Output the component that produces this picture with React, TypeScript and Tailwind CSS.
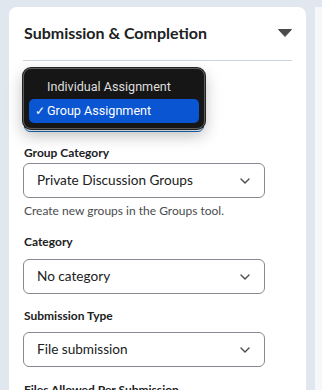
import type { ReactNode } from 'react'

function Chevron() {
  return (
    <svg width="10" height="6" viewBox="0 0 10 6" fill="none" aria-hidden="true">
      <path d="M1 1l4 4 4-4" stroke="#494c4e" strokeWidth="1.4" strokeLinecap="round" strokeLinejoin="round" />
    </svg>
  )
}

type SelectBoxProps = {
  value: string
  className?: string
}

function SelectBox({ value, className = '' }: SelectBoxProps) {
  return (
    <div
      className={`flex h-[35px] w-[242px] items-center justify-between rounded-[6px] border border-[#868b91] bg-white pl-[13px] pr-[14px] text-[13.6px] text-[#202122] ${className}`}
    >
      <span>{value}</span>
      <Chevron />
    </div>
  )
}

function Label({ children, className = '' }: { children: ReactNode; className?: string }) {
  return <p className={`text-[12px] font-bold leading-[16px] text-[#202122] ${className}`}>{children}</p>
}

function NativeMenu() {
  return (
    <div
      className="absolute left-[14px] top-[61px] w-[182px] rounded-[8px] border border-[#5c5c5c] bg-[#161616] px-[5px] pb-[5px] pt-[6px] shadow-[0_0_0_1px_rgba(0,0,0,0.85),0_6px_16px_rgba(0,0,0,0.28)]"
      style={{ fontFamily: 'Roboto, "Noto Sans", sans-serif' }}
    >
      <div className="flex h-[24px] items-center pl-[18px] text-[12.6px] text-[#dedede]">Individual Assignment</div>
      <div className="flex h-[24px] items-center rounded-[5px] bg-[#0a55d2] text-[12.6px] text-white">
        <span className="w-[18px] pl-[6px] text-[12px]">✓</span>
        <span>Group Assignment</span>
      </div>
    </div>
  )
}

export default function App() {
  return (
    <div
      className="flex h-[390px] w-full overflow-hidden bg-[#e1e7ef] pl-[9px] pt-[7px]"
      style={{ fontFamily: 'Lato, "Open Sans", sans-serif' }}
    >
      <section className="relative h-full w-[297px] shrink-0 rounded-t-[8px] bg-white pl-[14px] pr-[14px] pt-[14px]">
        <header className="flex h-[24px] items-center justify-between pl-px">
          <h2 className="text-[16px] font-bold leading-[24px] text-[#202122]">Submission &amp; Completion</h2>
          <svg width="14" height="8" viewBox="0 0 14 8" aria-hidden="true">
            <path d="M0.5 0.5h13L7 7.5z" fill="#494c4e" stroke="#494c4e" strokeLinejoin="round" />
          </svg>
        </header>
        <div className="mt-[15px] border-t border-[#cdd4de]" />

        {/* select behind the open native menu */}
        <div className="ml-px mt-[36px] h-[35px] w-[180px] rounded-[6px] border border-[#1a6fbf]" />

        <Label className="mt-[13px] pl-px">Group Category</Label>
        <SelectBox value="Private Discussion Groups" className="mt-[2px]" />
        <p className="mt-[5px] pl-px text-[12px] leading-[16px] text-[#494c4e]">Create new groups in the Groups tool.</p>

        <Label className="mt-[15px] pl-px">Category</Label>
        <SelectBox value="No category" className="mt-[9px]" />

        <Label className="mt-[14px] pl-px">Submission Type</Label>
        <SelectBox value="File submission" className="mt-[8px]" />

        <Label className="mt-[15px] pl-px">Files Allowed Per Submission</Label>

        <NativeMenu />
      </section>
      <div className="w-[9px] shrink-0" />
      <div className="h-full flex-1 bg-[#f6f7f9]" />
    </div>
  )
}
